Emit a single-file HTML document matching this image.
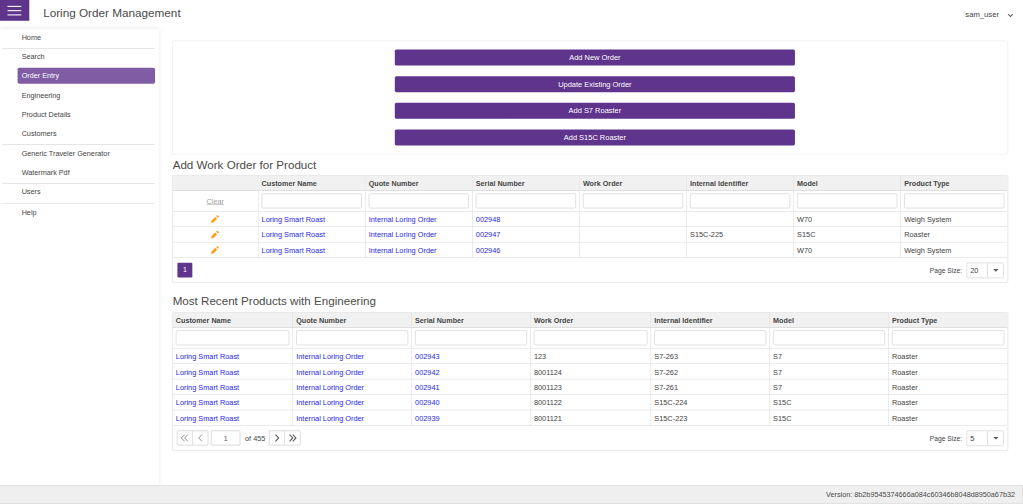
<!DOCTYPE html>
<html lang="en">
<head>
<meta charset="utf-8">
<title>Loring Order Management</title>
<style>
*{box-sizing:border-box;margin:0;padding:0}
html,body{width:1023px;height:504px;overflow:hidden;background:#fff}
body{font-family:"Liberation Sans",sans-serif;color:#3b3b3b}
#stage{position:absolute;left:0;top:0;width:1920px;height:946px;transform:scale(0.53281);transform-origin:0 0;font-size:13.7px;background:#fff;overflow:hidden}
.abs{position:absolute}
/* top bar */
#burger{left:0;top:0;width:55px;height:39px;background:#5f348c}
#burger i{position:absolute;left:14px;width:26px;height:2px;background:#fff}
#title{left:81px;top:9px;font-size:22px;line-height:30px;white-space:nowrap;color:#4a4a4a}
#user{right:45px;top:17px;font-size:14.4px;line-height:20px;white-space:nowrap;color:#444}
#chev{left:1891px;top:24.5px;width:11px;height:8px}
/* sidebar */
#side{left:0;top:54px;width:299px;height:857px;background:#fff;box-shadow:0 0 8px rgba(0,0,0,.16)}
#side .it{position:absolute;left:33px;width:258px;height:30px;line-height:30px;padding-left:7.6px;white-space:nowrap;border-radius:3px;color:#444;font-size:13.6px}
#side .it.sel{background:#7f5ca3;color:#fff}
#side .sep{position:absolute;left:4px;width:287px;height:1px;background:#cfcfcf}
/* panel */
#panel{left:323px;top:76px;width:1569px;height:214px;border:1px solid #e4e4e4;border-radius:4px;background:#fff}
.btn{position:absolute;left:741px;width:751px;height:30px;line-height:31px;background:#5f348c;color:#fff;text-align:center;border-radius:3px;font-size:14px}
h2{position:absolute;left:324px;font-weight:400;font-size:21.8px;line-height:30px;white-space:nowrap;color:#4a4a4a}
/* grids */
.grid{position:absolute;left:323px;width:1569px;border:1px solid #d6d6d6;border-radius:3px;background:#fff;overflow:hidden}
table{border-collapse:separate;border-spacing:0;table-layout:fixed;width:1567px}
th,td{border-right:1px solid #dadada;border-bottom:1px solid #dadada;padding:0 6px;text-align:left;white-space:nowrap;overflow:hidden;font-size:13.7px}
th:last-child,td:last-child{border-right:0}
th{height:28px;background:#f1f1f1;font-weight:700;color:#454545;font-size:13.5px;padding-top:1px;border-bottom-color:#cbcbcb}
tr.f td{height:39px}
tr.r td{height:29px;color:#444;font-size:13.8px}
tr.d td{padding-top:2px}
td a{color:#2828e6;text-decoration:none}
.inp{display:block;width:100%;height:28px;border:1px solid #c6c6c6;border-radius:3px;background:#fff}
.clear{display:block;text-align:center;color:#a2a2a2;text-decoration:underline}
.pc{text-align:center}.pc svg{display:block;margin:0 auto;transform:translateX(-.4px)}
.pager{position:relative;height:46px}
.pg1{position:absolute;left:9px;top:9px;width:28px;height:28px;background:#5f348c;color:#fff;text-align:center;line-height:28px;border-radius:2px;font-size:13px}
.pslab{position:absolute;top:9px;line-height:30px;color:#444;white-space:nowrap;font-size:12.6px}
.pssel{position:absolute;top:9px;width:70px;height:29px;border:1px solid #c6c6c6;border-radius:3px}
.pssel b{position:absolute;left:38px;top:0;width:1px;height:27px;background:#c6c6c6}
.pssel span{position:absolute;left:6px;top:0;line-height:27px;font-weight:400}
.pssel i{position:absolute;left:49px;top:11px;width:0;height:0;border-left:5px solid transparent;border-right:5px solid transparent;border-top:5px solid #585858}
.bg{position:absolute;top:9px;height:28px;border:1px solid #bcbcbc;border-radius:2px}
.bg u{position:absolute;top:0;width:1px;height:26px;background:#c8c8c8}
.bg svg{position:absolute;top:0}
/* footer */
#foot{left:0;top:911px;width:1920px;height:35px;background:#efefef;border:1px solid #d4d4d4;border-left:0;text-align:right;padding-right:14px;line-height:32px;color:#4a4a4a;white-space:nowrap;font-size:13.6px}
</style>
</head>
<body>
<div id="stage">
  <div id="burger" class="abs"><i style="top:11px"></i><i style="top:19px"></i><i style="top:27px"></i></div>
  <div id="title" class="abs">Loring Order Management</div>
  <div id="user" class="abs">sam_user</div>
  <svg id="chev" class="abs" viewBox="0 0 11 8"><path d="M1.3 1.6 L5.5 6 L9.7 1.6" fill="none" stroke="#555" stroke-width="1.9"/></svg>

  <div id="side" class="abs">
    <div class="it" style="top:2px">Home</div>
    <div class="sep" style="top:37px"></div>
    <div class="it" style="top:38px">Search</div>
    <div class="it sel" style="top:73px;line-height:31px">Order Entry</div>
    <div class="it" style="top:110px">Engineering</div>
    <div class="it" style="top:146px">Product Details</div>
    <div class="it" style="top:182px">Customers</div>
    <div class="sep" style="top:217px"></div>
    <div class="it" style="top:220px">Generic Traveler Generator</div>
    <div class="it" style="top:256px">Watermark Pdf</div>
    <div class="sep" style="top:290px"></div>
    <div class="it" style="top:292px">Users</div>
    <div class="sep" style="top:328px"></div>
    <div class="it" style="top:330px">Help</div>
  </div>

  <div id="panel" class="abs"></div>
  <div class="btn" style="top:93px">Add New Order</div>
  <div class="btn" style="top:143px">Update Existing Order</div>
  <div class="btn" style="top:193px">Add S7 Roaster</div>
  <div class="btn" style="top:243px">Add S15C Roaster</div>

  <h2 style="top:295px">Add Work Order for Product</h2>

  <div class="grid" style="top:329px">
    <table>
      <colgroup><col style="width:161px"><col style="width:201px"><col style="width:201px"><col style="width:201px"><col style="width:201px"><col style="width:201px"><col style="width:201px"><col style="width:200px"></colgroup>
      <tr><th></th><th>Customer Name</th><th>Quote Number</th><th>Serial Number</th><th>Work Order</th><th>Internal Identifier</th><th>Model</th><th>Product Type</th></tr>
      <tr class="f"><td><span class="clear">Clear</span></td><td><span class="inp"></span></td><td><span class="inp"></span></td><td><span class="inp"></span></td><td><span class="inp"></span></td><td><span class="inp"></span></td><td><span class="inp"></span></td><td><span class="inp"></span></td></tr>
      <tr class="r"><td class="pc"><svg width="16" height="16" viewBox="0 0 16 16"><path d="M0.3 15.7 L1.5 10.96 L8.29 4.17 L11.83 7.71 L5.04 14.5 Z M9.99 2.48 L11.97 0.5 L15.5 4.03 L13.52 6.01 Z" fill="#ff9f0f"/></svg></td><td><a>Loring Smart Roast</a></td><td><a>Internal Loring Order</a></td><td><a>002948</a></td><td></td><td></td><td>W70</td><td>Weigh System</td></tr>
      <tr class="r"><td class="pc"><svg width="16" height="16" viewBox="0 0 16 16"><path d="M0.3 15.7 L1.5 10.96 L8.29 4.17 L11.83 7.71 L5.04 14.5 Z M9.99 2.48 L11.97 0.5 L15.5 4.03 L13.52 6.01 Z" fill="#ff9f0f"/></svg></td><td><a>Loring Smart Roast</a></td><td><a>Internal Loring Order</a></td><td><a>002947</a></td><td></td><td>S15C-225</td><td>S15C</td><td>Roaster</td></tr>
      <tr class="r"><td class="pc"><svg width="16" height="16" viewBox="0 0 16 16"><path d="M0.3 15.7 L1.5 10.96 L8.29 4.17 L11.83 7.71 L5.04 14.5 Z M9.99 2.48 L11.97 0.5 L15.5 4.03 L13.52 6.01 Z" fill="#ff9f0f"/></svg></td><td><a>Loring Smart Roast</a></td><td><a>Internal Loring Order</a></td><td><a>002946</a></td><td></td><td></td><td>W70</td><td>Weigh System</td></tr>
    </table>
    <div class="pager">
      <div class="pg1">1</div>
      <div class="pslab" style="left:1421px">Page Size:</div>
      <div class="pssel" style="left:1490px"><span>20</span><b></b><i></i></div>
    </div>
  </div>

  <h2 style="top:551px">Most Recent Products with Engineering</h2>

  <div class="grid" style="top:586px">
    <table>
      <colgroup><col style="width:226px"><col style="width:223px"><col style="width:223px"><col style="width:226px"><col style="width:223px"><col style="width:223px"><col style="width:223px"></colgroup>
      <tr><th>Customer Name</th><th>Quote Number</th><th>Serial Number</th><th>Work Order</th><th>Internal Identifier</th><th>Model</th><th>Product Type</th></tr>
      <tr class="f"><td><span class="inp"></span></td><td><span class="inp"></span></td><td><span class="inp"></span></td><td><span class="inp"></span></td><td><span class="inp"></span></td><td><span class="inp"></span></td><td><span class="inp"></span></td></tr>
      <tr class="r"><td><a>Loring Smart Roast</a></td><td><a>Internal Loring Order</a></td><td><a>002943</a></td><td>123</td><td>S7-263</td><td>S7</td><td>Roaster</td></tr>
      <tr class="r d"><td><a>Loring Smart Roast</a></td><td><a>Internal Loring Order</a></td><td><a>002942</a></td><td>8001124</td><td>S7-262</td><td>S7</td><td>Roaster</td></tr>
      <tr class="r d"><td><a>Loring Smart Roast</a></td><td><a>Internal Loring Order</a></td><td><a>002941</a></td><td>8001123</td><td>S7-261</td><td>S7</td><td>Roaster</td></tr>
      <tr class="r"><td><a>Loring Smart Roast</a></td><td><a>Internal Loring Order</a></td><td><a>002940</a></td><td>8001122</td><td>S15C-224</td><td>S15C</td><td>Roaster</td></tr>
      <tr class="r d"><td><a>Loring Smart Roast</a></td><td><a>Internal Loring Order</a></td><td><a>002939</a></td><td>8001121</td><td>S15C-223</td><td>S15C</td><td>Roaster</td></tr>
    </table>
    <div class="pager">
      <div class="bg" style="left:8px;width:59px"><u style="left:28px"></u>
        <svg style="left:0" width="28" height="26" viewBox="0 0.5 28 26"><path d="M13.5 7.2 L7.5 13.5 L13.5 19.8 M19.5 7.2 L13.5 13.5 L19.5 19.8" fill="none" stroke="#8c8c8c" stroke-width="1.8"/></svg>
        <svg style="left:29px" width="28" height="26" viewBox="0 0.5 28 26"><path d="M17 7.2 L11 13.5 L17 19.8" fill="none" stroke="#8c8c8c" stroke-width="1.8"/></svg>
      </div>
      <div class="bg" style="left:72px;width:55px;text-align:center;line-height:28px;font-size:13px;color:#555">1</div>
      <div class="pslab" style="left:136px;top:9px;font-size:13.6px">of 455</div>
      <div class="bg" style="left:181px;width:59px"><u style="left:28px"></u>
        <svg style="left:0" width="28" height="26" viewBox="0 0.5 28 26"><path d="M11 7.2 L17 13.5 L11 19.8" fill="none" stroke="#505050" stroke-width="1.9"/></svg>
        <svg style="left:29px" width="28" height="26" viewBox="0 0.5 28 26"><path d="M8.5 7.2 L14.5 13.5 L8.5 19.8 M14.5 7.2 L20.5 13.5 L14.5 19.8" fill="none" stroke="#505050" stroke-width="1.9"/></svg>
      </div>
      <div class="pslab" style="left:1421px">Page Size:</div>
      <div class="pssel" style="left:1490px"><span>5</span><b></b><i></i></div>
    </div>
  </div>

  <div id="foot" class="abs">Version: 8b2b9545374666a084c60346b8048d8950a67b32</div>
</div>
</body>
</html>
